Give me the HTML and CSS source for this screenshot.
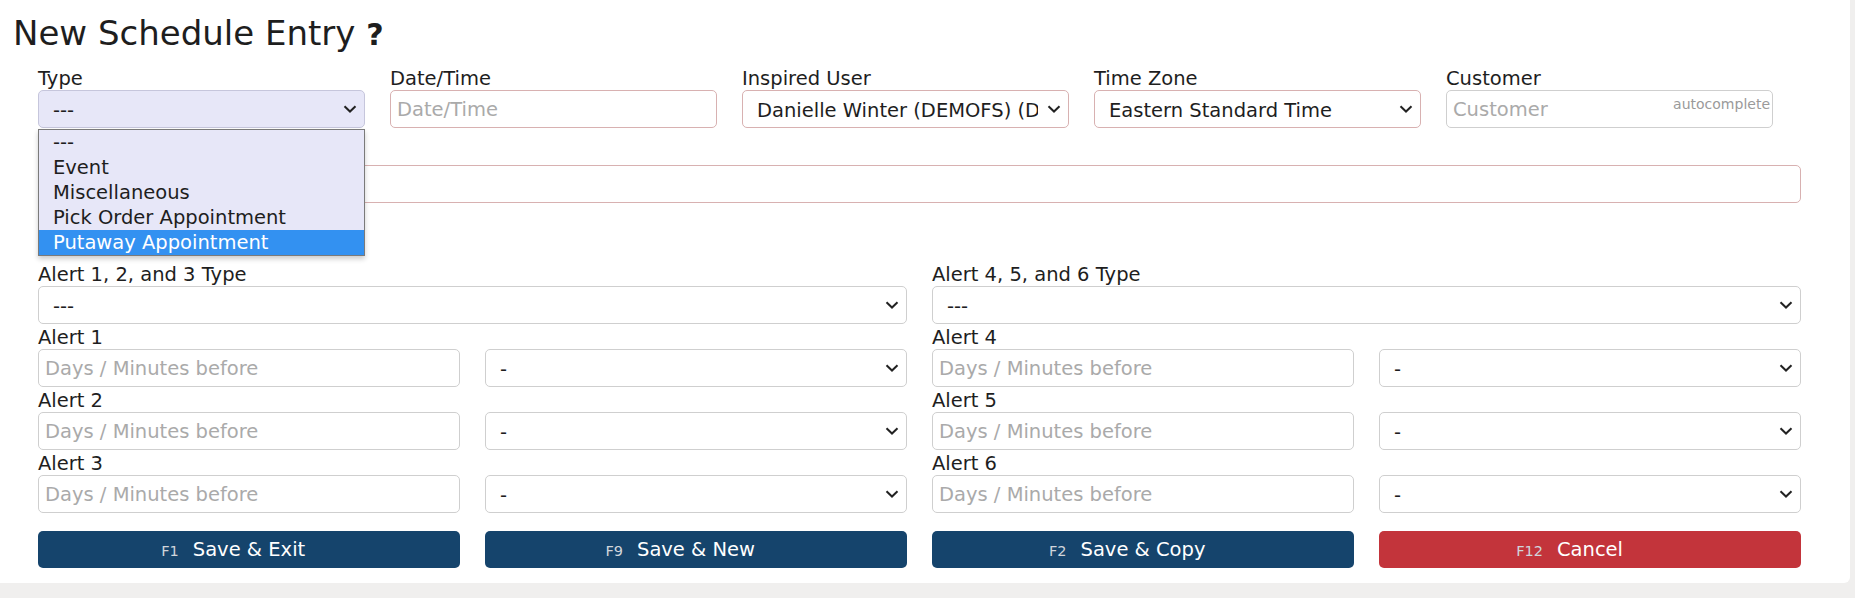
FILE: index.html
```html
<!DOCTYPE html>
<html lang="en">
<head>
  <meta charset="UTF-8">
  <title>New Schedule Entry</title>
  <link rel="stylesheet" href="styles.css">
</head>
<body>

  <div class="panel">
    <h1 class="title">New Schedule Entry <span class="help">?</span></h1>

    <!-- first row -->
    <div class="top-row">
      <div class="field">
        <label class="label">Type</label>
        <div class="select-wrap">
          <select class="control select type-select"><option>---</option></select>
          <svg class="chev" width="14" height="8" viewBox="0 0 14 8"><path d="M1.5 1.2l5.5 5.3 5.5-5.3" fill="none" stroke="#222" stroke-width="2"/></svg>
          <ul class="dropdown">
            <li>---</li>
            <li>Event</li>
            <li>Miscellaneous</li>
            <li>Pick Order Appointment</li>
            <li class="active">Putaway Appointment</li>
          </ul>
        </div>
      </div>
      <div class="field">
        <label class="label">Date/Time</label>
        <input class="control required" type="text" placeholder="Date/Time">
      </div>
      <div class="field">
        <label class="label">Inspired User</label>
        <div class="select-wrap">
          <select class="control select required"><option>Danielle Winter (DEMOFS) (DEMO)</option></select>
          <svg class="chev" width="14" height="8" viewBox="0 0 14 8"><path d="M1.5 1.2l5.5 5.3 5.5-5.3" fill="none" stroke="#222" stroke-width="2"/></svg>
        </div>
      </div>
      <div class="field">
        <label class="label">Time Zone</label>
        <div class="select-wrap">
          <select class="control select required"><option>Eastern Standard Time</option></select>
          <svg class="chev" width="14" height="8" viewBox="0 0 14 8"><path d="M1.5 1.2l5.5 5.3 5.5-5.3" fill="none" stroke="#222" stroke-width="2"/></svg>
        </div>
      </div>
      <div class="field">
        <label class="label">Customer</label>
        <div class="select-wrap">
          <input class="control" type="text" placeholder="Customer">
          <span class="hint">autocomplete</span>
        </div>
      </div>
    </div>

    <!-- label of this row is hidden under the open Type list -->
    <div class="field wide">
      <span class="label"></span>
      <input class="control required" type="text">
    </div>

    <!-- alerts -->
    <div class="alerts alerts-head">
      <div class="field span2">
        <label class="label">Alert 1, 2, and 3 Type</label>
        <div class="select-wrap">
          <select class="control select"><option>---</option></select>
          <svg class="chev" width="14" height="8" viewBox="0 0 14 8"><path d="M1.5 1.2l5.5 5.3 5.5-5.3" fill="none" stroke="#222" stroke-width="2"/></svg>
        </div>
      </div>
      <div class="field span2">
        <label class="label">Alert 4, 5, and 6 Type</label>
        <div class="select-wrap">
          <select class="control select"><option>---</option></select>
          <svg class="chev" width="14" height="8" viewBox="0 0 14 8"><path d="M1.5 1.2l5.5 5.3 5.5-5.3" fill="none" stroke="#222" stroke-width="2"/></svg>
        </div>
      </div>
    </div>
    <div class="alerts" id="alertRows"></div>

    <div class="actions">
      <button class="btn"><span class="btn-text"><span class="key">F1</span>Save &amp; Exit</span></button>
      <button class="btn"><span class="btn-text"><span class="key">F9</span>Save &amp; New</span></button>
      <button class="btn"><span class="btn-text"><span class="key">F2</span>Save &amp; Copy</span></button>
      <button class="btn btn-cancel"><span class="btn-text"><span class="key">F12</span>Cancel</span></button>
    </div>
  </div>

  <script>
    // alert rows: left column is 1-3, right column is 4-6
    const alertRows = document.getElementById('alertRows');
    const chev = '<svg class="chev" width="14" height="8" viewBox="0 0 14 8"><path d="M1.5 1.2l5.5 5.3 5.5-5.3" fill="none" stroke="#222" stroke-width="2"/></svg>';

    function alertCells(n) {
      return `
        <div class="field">
          <label class="label">Alert ${n}</label>
          <input class="control" type="text" placeholder="Days / Minutes before">
        </div>
        <div class="field">
          <span class="label"></span>
          <div class="select-wrap">
            <select class="control select"><option>-</option></select>
            ${chev}
          </div>
        </div>`;
    }

    for (let i = 1; i <= 3; i++) {
      alertRows.innerHTML += alertCells(i) + alertCells(i + 3);
    }
  </script>
</body>
</html>
```

FILE: styles.css
```css
body {
  margin: 0;
  background-color: #f0efee;
  font-family: "DejaVu Sans", Verdana, sans-serif;
  color: #1e1e1e;
}

.panel {
  width: 1850px;
  height: 583px;
  box-sizing: border-box;
  padding: 13px 49px 15px 38px;
  background-color: #fff;
  border-radius: 0 0 6px 0;
}

.title {
  height: 40px;
  margin: 0 0 12px -25px;
  font-size: 34px;
  font-weight: normal;
  line-height: 40px;
}

.title .help {
  font-size: 30px;
  font-weight: bold;
  line-height: 1;
}

/* rows */
.top-row {
  display: grid;
  grid-template-columns: repeat(5, 327px);
  column-gap: 25px;
}

.wide {
  margin-top: 12px;
}

.alerts {
  display: grid;
  grid-template-columns: repeat(4, 1fr);
  column-gap: 25px;
}

.alerts-head {
  margin-top: 58px;
}

.span2 {
  grid-column: span 2;
}

.label {
  display: block;
  height: 25px;
  line-height: 28px;
  font-size: 19.5px;
  white-space: nowrap;
}

/* inputs and selects */
.control {
  display: block;
  width: 100%;
  height: 38px;
  box-sizing: border-box;
  margin: 0;
  padding: 0 6px;
  border: 1px solid #cfcfcf;
  border-radius: 5px;
  background-color: #fff;
  font-family: inherit;
  font-size: 19.5px;
  color: #1e1e1e;
  outline: none;
}

.control::placeholder {
  color: #aaa;
}

.required {
  border-color: #d8b1b1;
}

.select-wrap {
  position: relative;
}

.select {
  appearance: none;
  -webkit-appearance: none;
  padding: 3px 30px 0 14px;
  white-space: nowrap;
  overflow: hidden;
}

.type-select {
  background-color: #e7e7f8;
  border-color: #c6c6dc;
}

.chev {
  position: absolute;
  right: 8px;
  top: 50%;
  margin-top: -4px;
  pointer-events: none;
}

.hint {
  position: absolute;
  right: 3px;
  top: 6px;
  font-size: 14px;
  line-height: 16px;
  color: #9a9a9a;
}

/* open list of the Type select */
.dropdown {
  position: absolute;
  top: calc(100% + 1px);
  left: 0;
  right: 0;
  z-index: 2;
  margin: 0;
  padding: 0;
  list-style: none;
  background-color: #e7e7f8;
  border: 1px solid #7a7a7a;
  box-shadow: 0 3px 5px rgba(0, 0, 0, 0.2);
}

.dropdown li {
  height: 25px;
  line-height: 25px;
  padding-left: 14px;
  font-size: 19.5px;
  color: #1e1e1e;
}

.dropdown .active {
  background-color: #3391f1;
  color: #fff;
}

/* buttons */
.actions {
  display: grid;
  grid-template-columns: repeat(4, 1fr);
  column-gap: 25px;
  margin-top: 18px;
}

.btn {
  height: 37px;
  border: none;
  border-radius: 5px;
  background-color: #15446c;
  color: #fff;
  font-family: inherit;
  font-size: 19.5px;
  cursor: pointer;
}

.btn-cancel {
  background-color: #c3343b;
}

.btn-text {
  position: relative;
}

.btn .key {
  position: absolute;
  right: 100%;
  bottom: 3px;
  margin-right: 14px;
  font-size: 14.5px;
  line-height: 14px;
  color: #d0d5db;
}
```
